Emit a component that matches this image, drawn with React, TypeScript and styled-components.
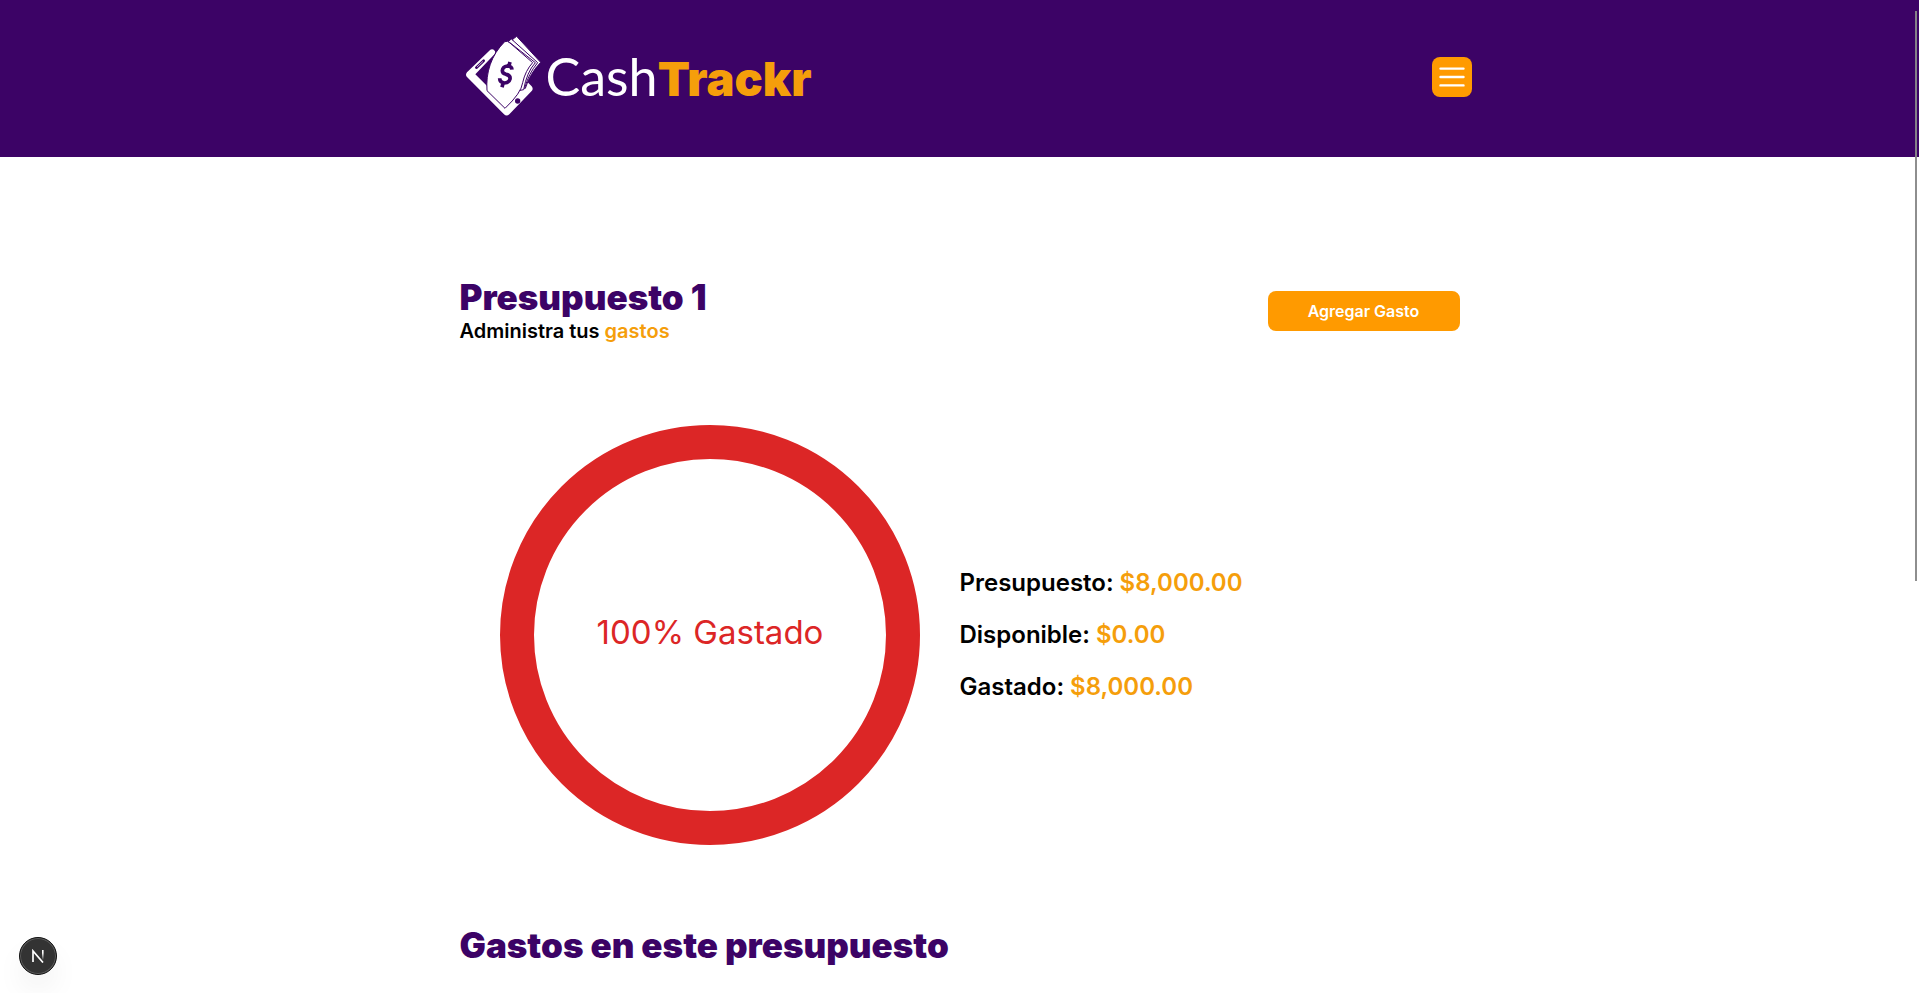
import React from "react";
import styled, { createGlobalStyle } from "styled-components";

const purple = "#3c0366";
const amber = "#f59e0b";
const orange = "#ff9a00";
const red = "#dc2626";

const GlobalStyle = createGlobalStyle`
  *, *::before, *::after { box-sizing: border-box; }
  body {
    margin: 0;
    background: #fff;
    color: #000;
    font-family: Inter, "Open Sans", sans-serif;
  }
  h1, h2, p, dl, dd { margin: 0; }
`;

const Header = styled.header`
  background: ${purple};
  padding: 25px 0 32px;
`;

const HeaderInner = styled.div`
  display: flex;
  align-items: flex-start;
  justify-content: space-between;
  max-width: 1024px;
  margin: 0 auto;
  padding-left: 12px;
`;

const LogoLink = styled.a`
  display: flex;
  align-items: center;
  text-decoration: none;
`;

const LogoMark = styled.svg`
  display: block;
  width: 86px;
  height: 100px;
`;

const Wordmark = styled.span`
  padding-top: 4px;
  font-family: Lato, sans-serif;
  font-size: 52px;
  line-height: 64px;
  font-weight: 400;
  color: #fff;
`;

const WordmarkAccent = styled.span`
  font-family: Inter, sans-serif;
  font-size: 47px;
  font-weight: 900;
  color: ${amber};
`;

const MenuButton = styled.button`
  display: grid;
  place-items: center;
  width: 40px;
  height: 40px;
  margin-top: 32px;
  padding: 0;
  border: 0;
  border-radius: 8px;
  background: ${orange};
  cursor: pointer;
`;

const Main = styled.main`
  max-width: 1000px;
  margin: 0 auto;
  padding: 120px 0 28px;
`;

const TitleBar = styled.div`
  display: flex;
  align-items: center;
  justify-content: space-between;
`;

const titleText = `
  font-size: 35px;
  line-height: 40px;
  font-weight: 900;
  color: ${purple};
`;

const PageTitle = styled.h1`${titleText}`;
const SectionTitle = styled.h2`${titleText}`;

const Subtitle = styled.p`
  font-size: 20px;
  line-height: 28px;
  font-weight: 600;
`;

const Accent = styled.span`
  color: ${amber};
`;

const AddButton = styled.button`
  width: 192px;
  height: 40px;
  padding: 0;
  border: 0;
  border-radius: 8px;
  background: ${orange};
  color: #fff;
  font-family: inherit;
  font-size: 16px;
  font-weight: 600;
  cursor: pointer;
`;

const Summary = styled.section`
  display: grid;
  grid-template-columns: 1fr 1fr;
  align-items: center;
  margin: 40px 0;
`;

const ChartCell = styled.div`
  padding: 40px;
`;

const Chart = styled.svg`
  display: block;
  width: 100%;
`;

const ChartLabel = styled.text`
  fill: ${red};
  font-size: 33px;
  text-anchor: middle;
`;

const Amounts = styled.dl`
  display: flex;
  flex-direction: column;
  gap: 20px;
`;

const AmountRow = styled.div`
  display: flex;
  gap: 6px;
  font-size: 24px;
  line-height: 32px;
  font-weight: 600;
`;

const AmountValue = styled.dd`
  color: ${amber};
`;

const DevBadge = styled.button`
  position: fixed;
  left: 19px;
  bottom: 18px;
  display: grid;
  place-items: center;
  width: 38px;
  height: 38px;
  padding: 0;
  border: 1px solid #111;
  border-radius: 50%;
  background: #333;
  box-shadow: inset 0 0 0 1px #5c5c5c, 0 16px 32px -8px rgba(0, 0, 0, 0.14);
`;

const ScrollThumb = styled.div`
  position: fixed;
  top: 11px;
  right: 2px;
  width: 2px;
  height: 570px;
  background: rgba(136, 136, 136, 0.95);
`;

const amounts = [
  { label: "Presupuesto:", value: "$8,000.00" },
  { label: "Disponible:", value: "$0.00" },
  { label: "Gastado:", value: "$8,000.00" },
];

function Logo() {
  return (
    <LogoLink href="#" aria-label="CashTrackr">
      <LogoMark viewBox="30 0 258 300" aria-hidden="true">
        <path
          d="M121 74Q128 70 134 77Q138 83 132 89L76 148L166 238L233 172L245 184Q251 191 245 198L178 268Q170 275 162 268L51 156Q45 149 51 142Z"
          fill="#fff"
        />
        <path d="M79 128L101 107" stroke={purple} strokeWidth="8" strokeLinecap="round" />
        <path d="M82 125L98 110" stroke="#fff" strokeWidth="2" strokeLinecap="round" />
        <circle cx="203" cy="228" r="8" fill={purple} />
        <g fill="#fff" stroke={purple} strokeWidth="3" strokeLinejoin="round">
          <path d="M188 43L200 34L272 112Q240 145 226 190L210 180Z" />
          <path d="M175 49L184 42L263 113Q236 145 224 190L200 190Z" />
          <path d="M165 54L172 47L256 113Q230 142 221 194L190 200Z" />
          <path d="M164 50Q172 46 180 54L248 113Q226 137 218 173Q214 204 165 250L111 197C107 143 123 91 164 50Z" />
        </g>
        <path
          d="M186 134Q185 123 172 123Q158 125 157 137Q157 145 168 148Q182 151 180 162Q177 174 163 174Q149 172 149 160M180 111L176 125M160 172L156 187"
          fill="none"
          stroke={purple}
          strokeWidth="11"
        />
      </LogoMark>
      <Wordmark>
        Cash<WordmarkAccent>Trackr</WordmarkAccent>
      </Wordmark>
    </LogoLink>
  );
}

export default function App() {
  return (
    <>
      <GlobalStyle />
      <Header>
        <HeaderInner>
          <Logo />
          <MenuButton type="button" aria-label="Menú">
            <svg width="32" height="32" viewBox="0 0 32 32" fill="none" stroke="#fff" strokeWidth="2.4" strokeLinecap="round">
              <path d="M4.5 7.6H27.5M4.5 16H27.5M4.5 24.4H27.5" />
            </svg>
          </MenuButton>
        </HeaderInner>
      </Header>
      <Main>
        <TitleBar>
          <div>
            <PageTitle>Presupuesto 1</PageTitle>
            <Subtitle>
              Administra tus <Accent>gastos</Accent>
            </Subtitle>
          </div>
          <AddButton type="button">Agregar Gasto</AddButton>
        </TitleBar>
        <Summary>
          <ChartCell>
            <Chart viewBox="0 0 420 420" role="img" aria-label="100% Gastado">
              <circle cx="210" cy="210" r="193" fill="none" stroke={red} strokeWidth="34" />
              <ChartLabel x="210" y="219">100% Gastado</ChartLabel>
            </Chart>
          </ChartCell>
          <Amounts>
            {amounts.map(({ label, value }) => (
              <AmountRow key={label}>
                <dt>{label}</dt>
                <AmountValue>{value}</AmountValue>
              </AmountRow>
            ))}
          </Amounts>
        </Summary>
        <SectionTitle>Gastos en este presupuesto</SectionTitle>
      </Main>
      <DevBadge type="button" aria-label="Next.js">
        <svg width="14" height="14" viewBox="0 0 14 14" fill="none" strokeWidth="1.7">
          <defs>
            <linearGradient id="stem" x1="0" y1="0" x2="0" y2="1">
              <stop offset="0.3" stopColor="#fff" />
              <stop offset="1" stopColor="#fff" stopOpacity="0" />
            </linearGradient>
          </defs>
          <path d="M2 13V2L12 13.5" stroke="#fff" />
          <rect x="11" y="1" width="1.6" height="10" fill="url(#stem)" />
        </svg>
      </DevBadge>
      <ScrollThumb />
    </>
  );
}
